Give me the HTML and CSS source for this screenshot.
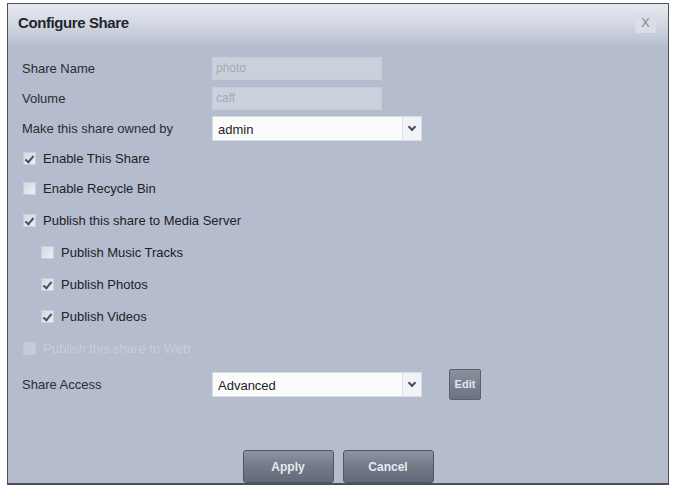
FILE: index.html
```html
<!DOCTYPE html>
<html lang="en">
<head>
    <meta charset="UTF-8">
    <title>Configure Share</title>
    <link rel="stylesheet" href="styles.css">
</head>
<body>
    <div class="dialog">
        <div class="title-bar">
            <h1>Configure Share</h1>
            <button class="close-btn" type="button">X</button>
        </div>
        <form class="share-form">
            <div class="row">
                <label>Share Name</label>
                <input class="text-field" type="text" value="photo" disabled>
            </div>
            <div class="row">
                <label>Volume</label>
                <input class="text-field" type="text" value="caff" disabled>
            </div>
            <div class="row">
                <label>Make this share owned by</label>
                <div class="select-box">
                    <span class="select-value">admin</span>
                    <span class="select-arrow"></span>
                </div>
            </div>
            <div class="row check-row">
                <span class="checkbox checked"></span>
                <span>Enable This Share</span>
            </div>
            <div class="row check-row tall">
                <span class="checkbox"></span>
                <span>Enable Recycle Bin</span>
            </div>
            <div class="row check-row taller">
                <span class="checkbox checked"></span>
                <span>Publish this share to Media Server</span>
            </div>
            <div class="row check-row taller sub">
                <span class="checkbox"></span>
                <span>Publish Music Tracks</span>
            </div>
            <div class="row check-row taller sub">
                <span class="checkbox checked"></span>
                <span>Publish Photos</span>
            </div>
            <div class="row check-row taller sub">
                <span class="checkbox checked"></span>
                <span>Publish Videos</span>
            </div>
            <div class="row check-row taller disabled">
                <span class="checkbox"></span>
                <span>Publish this share to Web</span>
            </div>
            <div class="row access-row">
                <label>Share Access</label>
                <div class="select-box">
                    <span class="select-value">Advanced</span>
                    <span class="select-arrow"></span>
                </div>
                <button class="edit-btn" type="button">Edit</button>
            </div>
            <div class="actions">
                <button class="action-btn" type="button">Apply</button>
                <button class="action-btn" type="button">Cancel</button>
            </div>
        </form>
    </div>
</body>
</html>
```

FILE: styles.css
```css
* {
    margin: 0;
    padding: 0;
    box-sizing: border-box;
}

body {
    background: #ffffff;
    font-family: 'Liberation Sans', Arial, sans-serif;
    font-size: 13px;
    color: #1e2128;
}

.dialog {
    margin: 3px 0 0 7px;
    width: 662px;
    height: 482px;
    border: 1px solid #4d5058;
    border-bottom-width: 2px;
    background: #b4bccd;
    display: flex;
    flex-direction: column;
}

.title-bar {
    height: 45px;
    padding: 0 12px 0 10px;
    display: flex;
    align-items: center;
    justify-content: space-between;
    background: linear-gradient(180deg, #e6e9ef 0%, #d3d8e2 45%, #b6bece 100%);
}

.title-bar h1 {
    font-size: 15px;
    font-weight: 700;
    letter-spacing: -0.4px;
    color: #22252c;
    margin-top: -6px;
}

.close-btn {
    width: 21px;
    height: 21px;
    margin-top: -6px;
    border: 1px solid #d9dde5;
    background: #dadee6;
    color: #8a919d;
    font-family: 'DejaVu Sans', sans-serif;
    font-size: 13px;
    line-height: 19px;
    text-align: center;
}

.share-form {
    flex: 1;
    padding: 6px 0 0 14px;
    display: flex;
    flex-direction: column;
}

.row {
    display: flex;
    align-items: center;
    height: 30px;
}

.row.tall {
    height: 31px;
}

.row.taller {
    height: 32px;
}

.row label {
    width: 190px;
    color: #2a2d34;
}

.text-field {
    width: 170px;
    height: 23px;
    border: 1px solid #c7cdd8;
    background: #cbd1dc;
    color: #a4aab6;
    font-family: 'Liberation Sans', Arial, sans-serif;
    font-size: 12px;
    padding: 0 3px;
}

.select-box {
    width: 210px;
    height: 25px;
    display: flex;
    background: #fbfbfc;
    border: 1px solid #d5dae3;
}

.select-value {
    flex: 1;
    padding: 5px 5px 0;
    color: #1c1e24;
}

.select-arrow {
    width: 19px;
    border-left: 1px solid #dde1e8;
    background: #f2f3f6;
    position: relative;
}

.select-arrow::after {
    content: "";
    position: absolute;
    left: 6px;
    top: 7px;
    width: 4px;
    height: 4px;
    border-right: 2px solid #4a4f5a;
    border-bottom: 2px solid #4a4f5a;
    transform: rotate(45deg);
}

.check-row {
    padding-left: 1px;
    gap: 7px;
}

.check-row.sub {
    padding-left: 19px;
}

.checkbox {
    width: 13px;
    height: 13px;
    border: 1px solid #c9ced8;
    background: linear-gradient(135deg, #d3d8e1 0%, #eef0f4 100%);
    position: relative;
}

.checkbox.checked::after {
    content: "";
    position: absolute;
    left: 3px;
    top: 1px;
    width: 3px;
    height: 7px;
    border-right: 2px solid #4b505c;
    border-bottom: 2px solid #4b505c;
    transform: rotate(40deg);
}

.check-row.disabled {
    color: #c8ceda;
}

.check-row.disabled .checkbox {
    border-color: #c2c8d3;
    background: #c6ccd7;
}

.access-row {
    height: 40px;
}

.edit-btn {
    margin-left: 27px;
    width: 32px;
    height: 31px;
    border: 1px solid #5a606c;
    border-radius: 2px;
    background: linear-gradient(180deg, #8a92a0 0%, #6a7282 100%);
    color: #e4e7ec;
    font-family: 'Liberation Sans', Arial, sans-serif;
    font-size: 11px;
    font-weight: 700;
}

.actions {
    margin-top: 46px;
    margin-left: -14px;
    display: flex;
    justify-content: center;
    gap: 9px;
}

.action-btn {
    width: 91px;
    height: 33px;
    border: 1px solid #4f5562;
    border-radius: 3px;
    background: linear-gradient(180deg, #8d95a3 0%, #727a8a 50%, #636b7b 100%);
    color: #e6e9ee;
    font-family: 'Liberation Sans', Arial, sans-serif;
    font-size: 12px;
    font-weight: 700;
}
```
